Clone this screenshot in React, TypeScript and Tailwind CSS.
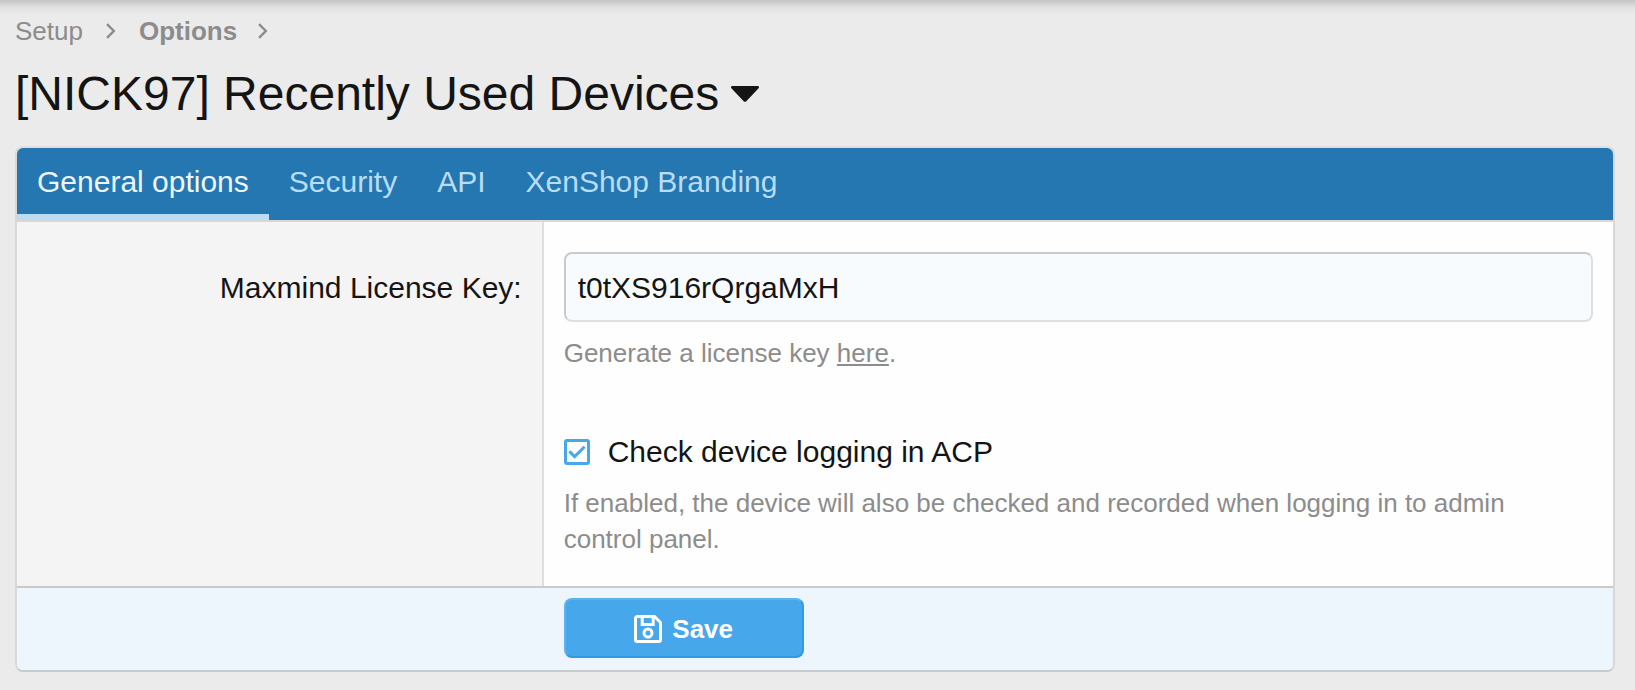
import { useState } from "react";

const tabs = ["General options", "Security", "API", "XenShop Branding"];

function Chevron() {
  return (
    <svg
      className="h-4 w-3"
      viewBox="0 0 12 16"
      fill="none"
      stroke="#8c8c8c"
      strokeWidth="2.4"
      aria-hidden="true"
    >
      <path d="M2 1.2 8.8 8 2 14.8" />
    </svg>
  );
}

function SaveIcon() {
  return (
    <svg
      className="h-7 w-7"
      viewBox="0 0 28 28"
      fill="none"
      stroke="currentColor"
      strokeWidth="3"
      aria-hidden="true"
    >
      <path d="M3.2 1.5h17.3l6 6v17.3a1.7 1.7 0 0 1-1.7 1.7H3.2a1.7 1.7 0 0 1-1.7-1.7V3.2a1.7 1.7 0 0 1 1.7-1.7Z" />
      <path d="M8.2 1.5v8h11v-8" />
      <circle cx="14" cy="18" r="4" />
    </svg>
  );
}

export default function App() {
  const [activeTab, setActiveTab] = useState(tabs[0]);
  const [licenseKey, setLicenseKey] = useState("t0tXS916rQrgaMxH");
  const [logging, setLogging] = useState(true);

  return (
    <div className="min-h-screen bg-[#ebebeb] font-['Liberation_Sans',Arial,sans-serif] text-[#141414]">
      <div className="h-[15px] bg-gradient-to-b from-[#c4c4c4] via-[#e2e2e2] to-[#ebebeb]" />

      <main className="pr-5 pb-4 pl-[15px]">
        <nav aria-label="Breadcrumb">
          <ol className="flex items-center gap-[22px] text-[26px] leading-[32px] text-[#8c8c8c]">
            <li className="flex items-center gap-[22px]">
              <a href="#setup">Setup</a>
              <Chevron />
            </li>
            <li className="flex items-center gap-5 font-bold">
              <a href="#options">Options</a>
              <Chevron />
            </li>
          </ol>
        </nav>

        <h1 className="mt-[13px] flex items-center gap-3 text-[48px] leading-[68px]">
          [NICK97] Recently Used Devices
          <button type="button" aria-label="Switch option group">
            <svg className="h-4 w-7" viewBox="0 0 28 16" fill="currentColor" aria-hidden="true">
              <path d="M1.4 0h25.2c1.3 0 1.9 1.4 1 2.3L15.3 15.2a1.9 1.9 0 0 1-2.6 0L.4 2.3C-.5 1.4.1 0 1.4 0Z" />
            </svg>
          </button>
        </h1>

        <form
          className="mt-[18px] overflow-hidden rounded-lg border-2 border-x-[#d8d8d8] border-t-[#dfdfdf] border-b-[#c9cacc] bg-[#fefefe]"
          onSubmit={(e) => e.preventDefault()}
        >
          <div
            role="tablist"
            className="flex border-b-2 border-[#d8d8d8] bg-[#2577b1] text-[30px] leading-[42px]"
          >
            {tabs.map((tab) => (
              <button
                key={tab}
                type="button"
                role="tab"
                aria-selected={tab === activeTab}
                onClick={() => setActiveTab(tab)}
                className={`border-b-6 px-5 pt-[13px] pb-[11px] ${
                  tab === activeTab
                    ? "border-[#b9ddf5] text-[#edf6fd]"
                    : "border-transparent text-[#b9ddf5]"
                }`}
              >
                {tab}
              </button>
            ))}
          </div>

          <div className="flex">
            <div className="w-[33%] shrink-0 border-r-2 border-[#dfdfdf] bg-[#f4f4f4] pt-[45px] pr-5 text-right text-[30px] leading-[42px]">
              <label htmlFor="license-key">Maxmind License Key:</label>
            </div>

            <div className="min-w-0 flex-1 px-5 pt-[30px] pb-[29px] text-[26px] leading-[36px] text-[#8c8c8c]">
              <input
                id="license-key"
                type="text"
                value={licenseKey}
                onChange={(e) => setLicenseKey(e.target.value)}
                className="block w-full rounded-lg border-2 border-t-[#c9cacc] border-r-[#dfdfdf] border-b-[#dfdfdf] border-l-[#c9cacc] bg-[#f8fbfe] px-3 pt-[13px] pb-[11px] text-[30px] leading-[42px] text-[#141414] outline-none"
              />
              <p className="mt-[13px] pr-5">
                Generate a license key{" "}
                <a href="#license" className="underline decoration-2 underline-offset-2">
                  here
                </a>
                .
              </p>

              <label className="mt-[60px] flex items-center gap-[18px] text-[30px] leading-[42px] text-[#141414]">
                <span className="grid size-[26px]">
                  <input
                    type="checkbox"
                    checked={logging}
                    onChange={(e) => setLogging(e.target.checked)}
                    className="peer col-start-1 row-start-1 size-[26px] appearance-none rounded-[3px] border-3 border-[#47a7eb]"
                  />
                  <svg
                    className="pointer-events-none invisible col-start-1 row-start-1 size-[26px] peer-checked:visible"
                    viewBox="0 0 26 26"
                    fill="none"
                    stroke="#47a7eb"
                    strokeWidth="3"
                    aria-hidden="true"
                  >
                    <path d="m5.4 12.4 5.2 5.2L20.6 7.8" />
                  </svg>
                </span>
                Check device logging in ACP
              </label>
              <p className="mt-3 pr-5">
                If enabled, the device will also be checked and recorded when
                logging in to admin control panel.
              </p>
            </div>
          </div>

          <div className="flex border-t-2 border-[#c9cacc] bg-[#edf6fd] pt-[10px] pb-3">
            <div className="w-[33%] shrink-0" />
            <button
              type="submit"
              className="ml-5 flex h-[60px] w-60 items-center justify-center gap-[10px] rounded-lg border-2 border-t-[#5eb2ee] border-r-[#2f9ae6] border-b-[#2f9ae6] border-l-[#5eb2ee] bg-[#47a7eb] pt-[2px] text-[26px] leading-[36px] font-bold text-white"
            >
              <SaveIcon />
              Save
            </button>
          </div>
        </form>
      </main>
    </div>
  );
}
